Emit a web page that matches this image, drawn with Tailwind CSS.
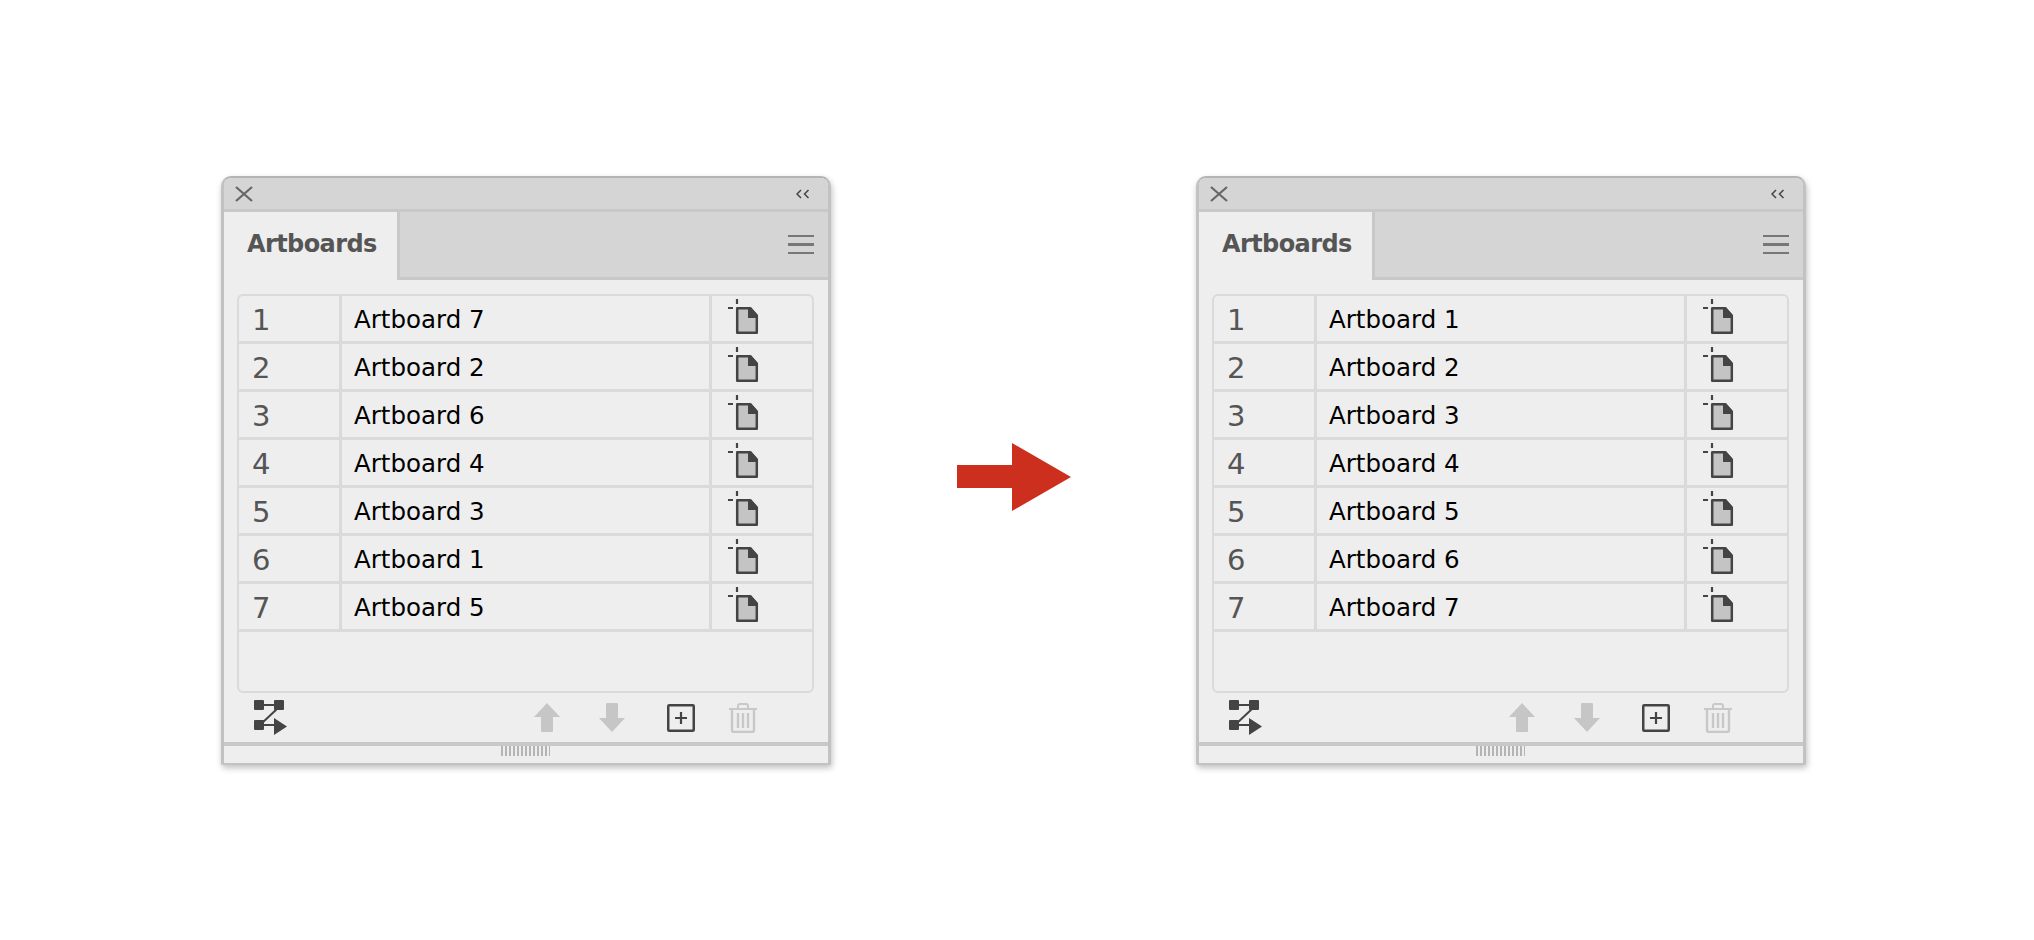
<!DOCTYPE html>
<html>
<head>
<meta charset="utf-8">
<script src="https://cdn.jsdelivr.net/npm/@tailwindcss/browser@4"></script>
</head>
<body class="bg-white">
<svg width="0" height="0" class="absolute">
  <defs>
    <symbol id="doc" viewBox="0 0 32 38">
      <path d="M10 1v5M1 10h5" stroke="#444" stroke-width="2.200" fill="none"/>
      <path d="M10.200 10.200h13l6.600 7.500v17.100H10.200z" fill="#c4c4c4" stroke="#444" stroke-width="2.500" stroke-linejoin="round"/>
      <path d="M21 9h2.500l7.500 8.500v2.500H21z" fill="#444"/>
    </symbol>
    <symbol id="shuffle" viewBox="0 0 34 36">
      <rect x="0" y="0" width="10" height="10" rx="1" fill="#444"/>
      <rect x="20" y="0" width="10" height="10" rx="1" fill="#444"/>
      <rect x="0" y="20" width="10" height="10" rx="1" fill="#444"/>
      <path d="M10 5h10M24 8 7 24M10 25h12" stroke="#444" stroke-width="2" fill="none"/>
      <path d="M20 18v17l13-8.500z" fill="#444"/>
    </symbol>
    <symbol id="up" viewBox="0 0 26 29">
      <path d="M13 0 26 14H19V28a1 1 0 0 1-1 1H8a1 1 0 0 1-1-1V14H0z" fill="#c6c6c6"/>
    </symbol>
    <symbol id="down" viewBox="0 0 26 29">
      <path d="M13 29 26 15H19V1a1 1 0 0 0-1-1H8a1 1 0 0 0-1 1V15H0z" fill="#c6c6c6"/>
    </symbol>
    <symbol id="plus" viewBox="0 0 28 28">
      <rect x="1.250" y="1.250" width="25.500" height="25.500" rx="1" fill="none" stroke="#444" stroke-width="2.500"/>
      <path d="M14 8v12M8 14h12" stroke="#444" stroke-width="2.200" fill="none"/>
    </symbol>
    <symbol id="trash" viewBox="0 0 28 30">
      <path d="M0 6h28M9 5V3q0-2 2-2h6q2 0 2 2v2" stroke="#c8c8c8" stroke-width="2" fill="none"/>
      <path d="M3 6v21q0 2 2 2h18q2 0 2-2V6" stroke="#c8c8c8" stroke-width="2.400" fill="none"/>
      <path d="M9 10v15M14 10v15M19 10v15" stroke="#c8c8c8" stroke-width="2.400" fill="none"/>
    </symbol>
    <symbol id="close" viewBox="0 0 18 16">
      <path d="M1 1 17 15M17 1 1 15" stroke="#666" stroke-width="2.200" fill="none"/>
    </symbol>
    <symbol id="collapse" viewBox="0 0 14 10">
      <path d="M5 1 1 5l4 4M12.500 1l-4 4 4 4" stroke="#444" stroke-width="1.500" fill="none"/>
    </symbol>
  </defs>
</svg>

<main class="flex items-start pl-[221px] pt-[176px] h-[940px] overflow-hidden font-['DejaVu_Sans',sans-serif]">

  <!-- Left panel -->
  <section class="w-[610px] h-[589px] shrink-0 flex flex-col rounded-t-[10px] rounded-b-[2px] border-t-2 border-b-2 border-x-[3px] border-[#c2c2c2] border-t-[#b4b4b4] bg-[#eeeeee] shadow-[1px_3px_6px_rgba(0,0,0,0.25)] overflow-hidden">
    <div class="h-[34px] shrink-0 flex items-center justify-between pl-[11px] pr-[18px] bg-[#d5d5d5] border-b-[3px] border-[#c8c8c8]">
      <svg width="18" height="16"><use href="#close"/></svg>
      <svg width="14" height="10"><use href="#collapse"/></svg>
    </div>
    <div class="h-[68px] shrink-0 flex items-stretch justify-between bg-[#d5d5d5] border-b-[3px] border-[#c8c8c8] pr-[14px]">
      <div class="w-[176px] -mb-[3px] flex items-center pl-[23px] pb-[4px] bg-[#eeeeee] border-r-[3px] border-[#c8c8c8] text-[24px] tracking-[-0.6px] font-bold text-[#555555]">Artboards</div>
      <div class="flex flex-col justify-center gap-[6px] w-[26px]">
        <div class="h-[2.500px] bg-[#777777]"></div>
        <div class="h-[2.500px] bg-[#777777]"></div>
        <div class="h-[2.500px] bg-[#777777]"></div>
      </div>
    </div>
    <div class="ml-[13px] mr-[14px] mt-[14px] h-[399px] shrink-0 rounded-[6px] border-2 border-[#dadada]">
      <div class="flex h-[48px] border-b-[3px] border-[#dadada]"><div class="w-[103px] flex items-center pl-[13px] pt-[4px] text-[29px] text-[#555555] border-r-[3px] border-[#dadada]">1</div><div class="flex-1 flex items-center pl-[12px] pt-[4px] text-[24.500px] text-black border-r-[3px] border-[#dadada]">Artboard 7</div><div class="w-[100px] pl-[15px] pt-[2px]"><svg width="32" height="38"><use href="#doc"/></svg></div></div>
      <div class="flex h-[48px] border-b-[3px] border-[#dadada]"><div class="w-[103px] flex items-center pl-[13px] pt-[4px] text-[29px] text-[#555555] border-r-[3px] border-[#dadada]">2</div><div class="flex-1 flex items-center pl-[12px] pt-[4px] text-[24.500px] text-black border-r-[3px] border-[#dadada]">Artboard 2</div><div class="w-[100px] pl-[15px] pt-[2px]"><svg width="32" height="38"><use href="#doc"/></svg></div></div>
      <div class="flex h-[48px] border-b-[3px] border-[#dadada]"><div class="w-[103px] flex items-center pl-[13px] pt-[4px] text-[29px] text-[#555555] border-r-[3px] border-[#dadada]">3</div><div class="flex-1 flex items-center pl-[12px] pt-[4px] text-[24.500px] text-black border-r-[3px] border-[#dadada]">Artboard 6</div><div class="w-[100px] pl-[15px] pt-[2px]"><svg width="32" height="38"><use href="#doc"/></svg></div></div>
      <div class="flex h-[48px] border-b-[3px] border-[#dadada]"><div class="w-[103px] flex items-center pl-[13px] pt-[4px] text-[29px] text-[#555555] border-r-[3px] border-[#dadada]">4</div><div class="flex-1 flex items-center pl-[12px] pt-[4px] text-[24.500px] text-black border-r-[3px] border-[#dadada]">Artboard 4</div><div class="w-[100px] pl-[15px] pt-[2px]"><svg width="32" height="38"><use href="#doc"/></svg></div></div>
      <div class="flex h-[48px] border-b-[3px] border-[#dadada]"><div class="w-[103px] flex items-center pl-[13px] pt-[4px] text-[29px] text-[#555555] border-r-[3px] border-[#dadada]">5</div><div class="flex-1 flex items-center pl-[12px] pt-[4px] text-[24.500px] text-black border-r-[3px] border-[#dadada]">Artboard 3</div><div class="w-[100px] pl-[15px] pt-[2px]"><svg width="32" height="38"><use href="#doc"/></svg></div></div>
      <div class="flex h-[48px] border-b-[3px] border-[#dadada]"><div class="w-[103px] flex items-center pl-[13px] pt-[4px] text-[29px] text-[#555555] border-r-[3px] border-[#dadada]">6</div><div class="flex-1 flex items-center pl-[12px] pt-[4px] text-[24.500px] text-black border-r-[3px] border-[#dadada]">Artboard 1</div><div class="w-[100px] pl-[15px] pt-[2px]"><svg width="32" height="38"><use href="#doc"/></svg></div></div>
      <div class="flex h-[48px] border-b-[3px] border-[#dadada]"><div class="w-[103px] flex items-center pl-[13px] pt-[4px] text-[29px] text-[#555555] border-r-[3px] border-[#dadada]">7</div><div class="flex-1 flex items-center pl-[12px] pt-[4px] text-[24.500px] text-black border-r-[3px] border-[#dadada]">Artboard 5</div><div class="w-[100px] pl-[15px] pt-[2px]"><svg width="32" height="38"><use href="#doc"/></svg></div></div>
    </div>
    <div class="h-[49px] shrink-0 flex items-center pl-[30px] pr-[71px]">
      <svg width="34" height="36" class="mr-auto mt-[1px]"><use href="#shuffle"/></svg>
      <svg width="26" height="29" class="mr-[39px]"><use href="#up"/></svg>
      <svg width="26" height="29" class="mr-[42px]"><use href="#down"/></svg>
      <svg width="28" height="28" class="mr-[34px]"><use href="#plus"/></svg>
      <svg width="28" height="30"><use href="#trash"/></svg>
    </div>
    <div class="flex-1 flex justify-center border-t-[4px] border-[#c8c8c8] pr-[2px]">
      <div class="w-[49px] h-[10px] bg-[repeating-linear-gradient(90deg,#b4b4b4_0,#b4b4b4_2px,transparent_2px,transparent_4px)]"></div>
    </div>
  </section>

  <!-- Arrow -->
  <svg width="114" height="68" viewBox="0 0 114 68" class="shrink-0 ml-[126px] mt-[267px]">
    <path d="M0 22H55V0L114 34 55 68V45H0z" fill="#cd2f1e"/>
  </svg>

  <div class="w-[125px] shrink-0"></div>

  <!-- Right panel -->
  <section class="w-[610px] h-[589px] shrink-0 flex flex-col rounded-t-[10px] rounded-b-[2px] border-t-2 border-b-2 border-x-[3px] border-[#c2c2c2] border-t-[#b4b4b4] bg-[#eeeeee] shadow-[1px_3px_6px_rgba(0,0,0,0.25)] overflow-hidden">
    <div class="h-[34px] shrink-0 flex items-center justify-between pl-[11px] pr-[18px] bg-[#d5d5d5] border-b-[3px] border-[#c8c8c8]">
      <svg width="18" height="16"><use href="#close"/></svg>
      <svg width="14" height="10"><use href="#collapse"/></svg>
    </div>
    <div class="h-[68px] shrink-0 flex items-stretch justify-between bg-[#d5d5d5] border-b-[3px] border-[#c8c8c8] pr-[14px]">
      <div class="w-[176px] -mb-[3px] flex items-center pl-[23px] pb-[4px] bg-[#eeeeee] border-r-[3px] border-[#c8c8c8] text-[24px] tracking-[-0.6px] font-bold text-[#555555]">Artboards</div>
      <div class="flex flex-col justify-center gap-[6px] w-[26px]">
        <div class="h-[2.500px] bg-[#777777]"></div>
        <div class="h-[2.500px] bg-[#777777]"></div>
        <div class="h-[2.500px] bg-[#777777]"></div>
      </div>
    </div>
    <div class="ml-[13px] mr-[14px] mt-[14px] h-[399px] shrink-0 rounded-[6px] border-2 border-[#dadada]">
      <div class="flex h-[48px] border-b-[3px] border-[#dadada]"><div class="w-[103px] flex items-center pl-[13px] pt-[4px] text-[29px] text-[#555555] border-r-[3px] border-[#dadada]">1</div><div class="flex-1 flex items-center pl-[12px] pt-[4px] text-[24.500px] text-black border-r-[3px] border-[#dadada]">Artboard 1</div><div class="w-[100px] pl-[15px] pt-[2px]"><svg width="32" height="38"><use href="#doc"/></svg></div></div>
      <div class="flex h-[48px] border-b-[3px] border-[#dadada]"><div class="w-[103px] flex items-center pl-[13px] pt-[4px] text-[29px] text-[#555555] border-r-[3px] border-[#dadada]">2</div><div class="flex-1 flex items-center pl-[12px] pt-[4px] text-[24.500px] text-black border-r-[3px] border-[#dadada]">Artboard 2</div><div class="w-[100px] pl-[15px] pt-[2px]"><svg width="32" height="38"><use href="#doc"/></svg></div></div>
      <div class="flex h-[48px] border-b-[3px] border-[#dadada]"><div class="w-[103px] flex items-center pl-[13px] pt-[4px] text-[29px] text-[#555555] border-r-[3px] border-[#dadada]">3</div><div class="flex-1 flex items-center pl-[12px] pt-[4px] text-[24.500px] text-black border-r-[3px] border-[#dadada]">Artboard 3</div><div class="w-[100px] pl-[15px] pt-[2px]"><svg width="32" height="38"><use href="#doc"/></svg></div></div>
      <div class="flex h-[48px] border-b-[3px] border-[#dadada]"><div class="w-[103px] flex items-center pl-[13px] pt-[4px] text-[29px] text-[#555555] border-r-[3px] border-[#dadada]">4</div><div class="flex-1 flex items-center pl-[12px] pt-[4px] text-[24.500px] text-black border-r-[3px] border-[#dadada]">Artboard 4</div><div class="w-[100px] pl-[15px] pt-[2px]"><svg width="32" height="38"><use href="#doc"/></svg></div></div>
      <div class="flex h-[48px] border-b-[3px] border-[#dadada]"><div class="w-[103px] flex items-center pl-[13px] pt-[4px] text-[29px] text-[#555555] border-r-[3px] border-[#dadada]">5</div><div class="flex-1 flex items-center pl-[12px] pt-[4px] text-[24.500px] text-black border-r-[3px] border-[#dadada]">Artboard 5</div><div class="w-[100px] pl-[15px] pt-[2px]"><svg width="32" height="38"><use href="#doc"/></svg></div></div>
      <div class="flex h-[48px] border-b-[3px] border-[#dadada]"><div class="w-[103px] flex items-center pl-[13px] pt-[4px] text-[29px] text-[#555555] border-r-[3px] border-[#dadada]">6</div><div class="flex-1 flex items-center pl-[12px] pt-[4px] text-[24.500px] text-black border-r-[3px] border-[#dadada]">Artboard 6</div><div class="w-[100px] pl-[15px] pt-[2px]"><svg width="32" height="38"><use href="#doc"/></svg></div></div>
      <div class="flex h-[48px] border-b-[3px] border-[#dadada]"><div class="w-[103px] flex items-center pl-[13px] pt-[4px] text-[29px] text-[#555555] border-r-[3px] border-[#dadada]">7</div><div class="flex-1 flex items-center pl-[12px] pt-[4px] text-[24.500px] text-black border-r-[3px] border-[#dadada]">Artboard 7</div><div class="w-[100px] pl-[15px] pt-[2px]"><svg width="32" height="38"><use href="#doc"/></svg></div></div>
    </div>
    <div class="h-[49px] shrink-0 flex items-center pl-[30px] pr-[71px]">
      <svg width="34" height="36" class="mr-auto mt-[1px]"><use href="#shuffle"/></svg>
      <svg width="26" height="29" class="mr-[39px]"><use href="#up"/></svg>
      <svg width="26" height="29" class="mr-[42px]"><use href="#down"/></svg>
      <svg width="28" height="28" class="mr-[34px]"><use href="#plus"/></svg>
      <svg width="28" height="30"><use href="#trash"/></svg>
    </div>
    <div class="flex-1 flex justify-center border-t-[4px] border-[#c8c8c8] pr-[2px]">
      <div class="w-[49px] h-[10px] bg-[repeating-linear-gradient(90deg,#b4b4b4_0,#b4b4b4_2px,transparent_2px,transparent_4px)]"></div>
    </div>
  </section>
</main>
</body>
</html>
